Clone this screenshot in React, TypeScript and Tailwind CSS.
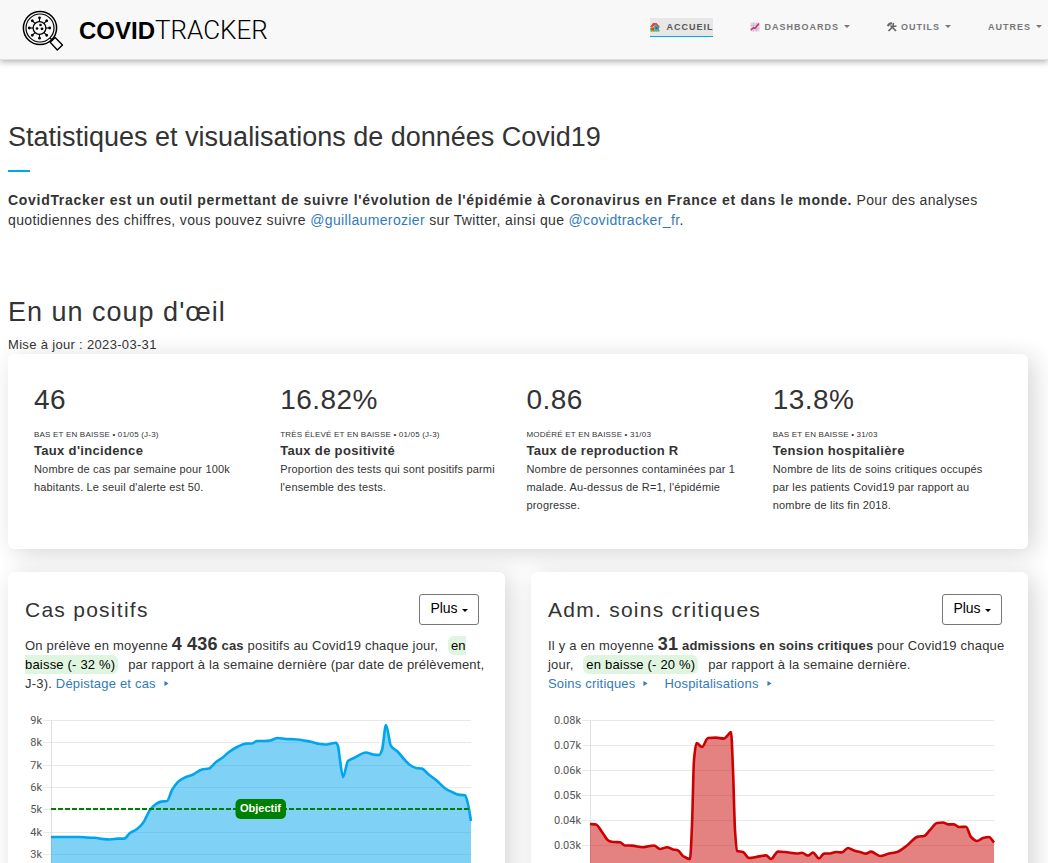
import type { ReactNode } from "react";

type Point = [number, number];

/* Monotone cubic interpolation, so the curve never overshoots its data. */
function smoothPath(points: Point[]): string {
  const n = points.length;
  const slopes: number[] = [];
  for (let i = 0; i < n - 1; i++) {
    slopes.push((points[i + 1][1] - points[i][1]) / (points[i + 1][0] - points[i][0]));
  }
  const tangents = points.map((_, i) => {
    if (i === 0) return slopes[0];
    if (i === n - 1) return slopes[n - 2];
    const a = slopes[i - 1];
    const b = slopes[i];
    return a * b <= 0 ? 0 : (2 * a * b) / (a + b);
  });
  let d = `M${points[0][0]},${points[0][1]}`;
  for (let i = 0; i < n - 1; i++) {
    const [x0, y0] = points[i];
    const [x1, y1] = points[i + 1];
    const h = (x1 - x0) / 3;
    d += `C${x0 + h},${y0 + tangents[i] * h} ${x1 - h},${y1 - tangents[i + 1] * h} ${x1},${y1}`;
  }
  return d;
}

const casPoints: Point[] = [
  [26, 127], [55, 127], [63, 127.6], [70, 127.8], [78, 129], [85, 129.5], [93, 128.6], [99, 128.6], [105, 123], [112, 119],
  [118, 113], [125, 100], [131, 94], [136, 91.6], [142, 91], [147, 80], [154, 71], [161, 67], [167, 65], [177, 59.5],
  [184, 58.5], [191, 52], [197, 48], [204, 42], [212, 37], [221, 33.6], [227, 33.5], [232, 31], [240, 31], [245, 30.5],
  [253, 28], [261, 29], [269, 29.2], [285, 31.5], [295, 34], [300, 34.5], [306, 33.6], [311, 32.8], [313, 36], [315, 50],
  [318, 67], [323, 51], [329, 48], [341, 42.5], [348, 44.5], [354, 45], [357, 40], [361, 15], [366, 36], [373, 42],
  [379, 49], [385, 55], [391, 58], [397, 58.6], [403, 64], [411, 70], [421, 79], [427, 82], [433, 84.6], [440, 85.2], [443, 94], [446, 111],
];

const admPoints: Point[] = [
  [42, 114], [48, 114.5], [54, 122], [61, 131], [66, 132], [72, 132.2], [77, 135.5], [84, 135.6], [95, 137.2], [106, 135.5],
  [112, 139], [119, 137.2], [125, 139.4], [130, 140.5], [135, 146], [142, 149], [144, 115], [146, 50], [148.5, 33], [154, 37],
  [160, 28], [168, 27.6], [176, 28.6], [180, 25], [183, 22], [185, 60], [187, 120], [189, 141], [195, 142], [201, 148],
  [210, 146.6], [218, 145.4], [223, 149], [230, 141.6], [237, 142], [249, 143.5], [254, 142.8], [260, 145.6], [265, 142.6],
  [271, 148.5], [276, 143.6], [282, 143.5], [288, 142], [294, 142.4], [300, 138], [306, 140.6], [312, 142], [318, 143.6],
  [323, 141.6], [332, 146], [341, 143.6], [349, 142], [359, 135.5], [370, 126.6], [376, 126], [382, 120], [389, 113],
  [395, 112.5], [400, 114.4], [406, 114.4], [411, 117], [418, 116.8], [423, 127], [429, 131], [435, 128], [441, 127], [446, 132.5],
];

interface ChartProps {
  title: string;
  ticks: { label: string; y: number }[];
  left: number;
  labelRight: number;
  points: Point[];
  stroke: string;
  fill: string;
  goalY?: number;
}

function AreaChart({ title, ticks, left, labelRight, points, stroke, fill, goalY }: ChartProps) {
  const line = smoothPath(points);
  const right = 446;
  const base = 212;
  return (
    <svg viewBox="0 0 463 216" role="img" aria-label={title} className="block w-full font-['Roboto',sans-serif]">
      {ticks.map((t) => (
        <g key={t.label}>
          <line x1={left - 8} x2={right} y1={t.y} y2={t.y} stroke="#e9e9e9" />
          <text x={labelRight} y={t.y + 3} textAnchor="end" fontSize="11" fill="#555">
            {t.label}
          </text>
        </g>
      ))}
      <line x1={left + 0.5} x2={left + 0.5} y1={ticks[0].y} y2={base} stroke="#e0e0e0" />
      <path d={`${line}L${points[points.length - 1][0]},${base}L${points[0][0]},${base}Z`} fill={fill} />
      <path d={line} fill="none" stroke={stroke} strokeWidth="2.6" strokeLinejoin="round" />
      {goalY !== undefined && (
        <g>
          <line x1={left} x2={right} y1={goalY} y2={goalY} stroke="green" strokeWidth="2" strokeDasharray="5 2" />
          <rect x="210.5" y={goalY - 10} width="50.5" height="20" rx="5" fill="green" />
          <text x="235.5" y={goalY + 3} textAnchor="middle" fontSize="11" fontWeight="700" fill="#fff" fontFamily="Liberation Sans, sans-serif">
            Objectif
          </text>
        </g>
      )}
    </svg>
  );
}

function Logo() {
  const spokes = [0, 45, 90, 135, 180, 225, 270, 315];
  return (
    <svg viewBox="0 0 42 42" className="size-[42px]" fill="none" stroke="#000" aria-hidden="true">
      <circle cx="18" cy="18" r="16.6" strokeWidth="1.5" />
      <circle cx="18" cy="18" r="14" strokeWidth="1.2" />
      <circle cx="17.5" cy="18" r="6.4" strokeWidth="1.3" />
      {spokes.map((a) => (
        <g key={a} transform={`rotate(${a} 17.5 18)`}>
          <path d="M17.5 11.6V8" strokeWidth="1.1" />
          <circle cx="17.5" cy="7.8" r="1.4" fill="#000" stroke="none" />
        </g>
      ))}
      <g fill="#000" stroke="none">
        <circle cx="18.5" cy="15" r="1.3" />
        <circle cx="15" cy="18.5" r="1.3" />
        <circle cx="20" cy="18.8" r="1.4" />
      </g>
      <path d="M28.2 32.2l4.900-4.600 7.400 7.400-5.200 5z" strokeWidth="1.4" strokeLinejoin="round" />
      <path d="M28 28l2.600 2.400" strokeWidth="1.4" />
    </svg>
  );
}

function HouseIcon() {
  return (
    <svg viewBox="0 0 20 20" className="size-[10px]" aria-hidden="true">
      <rect x="1" y="16" width="18" height="3" rx="1" fill="#5c9e31" />
      <path d="M3 9h14v8H3z" fill="#e8c9a0" />
      <path d="M8 8l5-4 5 5v8H9z" fill="#4f9cc0" />
      <path d="M0 10L6 2h7l7 8-2 1-6-6-9 6z" fill="#d84a2b" />
      <rect x="4" y="11" width="4" height="6" fill="#d2452d" />
      <rect x="11" y="10" width="4" height="4" fill="#2c6e91" />
      <circle cx="3" cy="14" r="2.5" fill="#4c9a2a" />
    </svg>
  );
}

function TrendIcon() {
  return (
    <svg viewBox="0 0 20 20" className="size-[10px]" aria-hidden="true">
      <rect x="1" y="1" width="18" height="18" fill="#ddd6e2" />
      <path d="M7 1v18M13 1v18M1 7h18M1 13h18" stroke="#b9aec6" strokeWidth="1" />
      <path d="M2 16l5-5 3 2 8-10" fill="none" stroke="#d81b60" strokeWidth="2.6" />
    </svg>
  );
}

function ToolsIcon() {
  return (
    <svg viewBox="0 0 20 20" className="size-[10px]" fill="none" stroke="#666" aria-hidden="true">
      <path d="M7 7l11 11" strokeWidth="3.4" />
      <path d="M1 8l4-4 5-2" strokeWidth="4.4" />
      <path d="M3 18L14 7" strokeWidth="3.4" />
      <path d="M13 2l-1 5 2 2 5-1" strokeWidth="3" />
    </svg>
  );
}

function Caret({ className = "" }: { className?: string }) {
  return (
    <svg viewBox="0 0 6 3" className={`inline-block h-[3px] w-[6px] ${className}`} aria-hidden="true">
      <path d="M0 0h6L3 3z" fill="currentColor" />
    </svg>
  );
}

function NavItem({ icon, label, active = false }: { icon?: ReactNode; label: string; active?: boolean }) {
  return (
    <a
      href="#"
      className={
        active
          ? "flex items-center gap-[6px] border-b border-[#00a8f0] bg-[#e7e7e7] text-[#555]"
          : "flex items-center gap-1 border-b border-transparent text-[#777]"
      }
    >
      {icon}
      {label}
      {!active && <Caret className="ml-[1px]" />}
    </a>
  );
}

const stats = [
  { value: "46", status: "BAS ET EN BAISSE • 01/05 (J-3)", name: "Taux d'incidence", text: "Nombre de cas par semaine pour 100k habitants. Le seuil d'alerte est 50." },
  { value: "16.82%", status: "TRÈS ÉLEVÉ ET EN BAISSE • 01/05 (J-3)", name: "Taux de positivité", text: "Proportion des tests qui sont positifs parmi l'ensemble des tests." },
  { value: "0.86", status: "MODÉRÉ ET EN BAISSE • 31/03", name: "Taux de reproduction R", text: "Nombre de personnes contaminées par 1 malade. Au-dessus de R=1, l'épidémie progresse." },
  { value: "13.8%", status: "BAS ET EN BAISSE • 31/03", name: "Tension hospitalière", text: "Nombre de lits de soins critiques occupés par les patients Covid19 par rapport au nombre de lits fin 2018." },
];

function Trend({ children }: { children: ReactNode }) {
  return <span className="mx-[6px] rounded-[6px] bg-[#dff5df] px-[3px] py-[2px] text-black">{children}</span>;
}

function MoreLink({ children }: { children: ReactNode }) {
  return (
    <a href="#" className="mr-4 text-[#337ab7]">
      {children}
      <svg viewBox="0 0 5 6" className="mb-[2px] ml-2 inline-block h-[5px] w-[5px]" aria-hidden="true">
        <path d="M0 0l5 3-5 3z" fill="currentColor" />
      </svg>
    </a>
  );
}

function DataCard({ title, summary, chart }: { title: string; summary: ReactNode; chart: ReactNode }) {
  return (
    <article className="rounded-[6px] bg-white px-[17px] pt-[22px] pb-6 shadow-[6px_4px_25px_#d6d6d6]">
      <div className="flex items-center justify-between pr-[9px]">
        <h3 className="text-[21px] leading-6 tracking-[0.06em]">{title}</h3>
        <button type="button" className="flex h-[31px] w-[60px] items-center justify-center gap-1 rounded-[3px] border border-[#777] pb-[2px] text-[14px] text-black">
          Plus <Caret className="mt-1" />
        </button>
      </div>
      <p className="mt-[10px] text-[13px] leading-[19px] tracking-[0.015em]">{summary}</p>
      <div className="mt-[17px]">{chart}</div>
    </article>
  );
}

export default function App() {
  return (
    <div className="bg-white font-['Liberation_Sans',Arial,sans-serif] text-[#333]">
      <header className="relative flex h-[60px] items-center justify-between border-b border-[#e0e0e0] bg-[#f8f8f8] pr-[6px] pl-[22px] shadow-[0_2px_6px_rgba(0,0,0,0.3)]">
        <a href="#" className="flex items-center gap-[15px] pt-[2px] text-black">
          <Logo />
          <span className="flex items-baseline pb-[2px] text-[24px] leading-none">
            <b>COVID</b>
            <span className="font-['Roboto',sans-serif] text-[26px] font-light">TRACKER</span>
          </span>
        </a>
        <nav className="flex gap-[37px] pb-[5px] text-[9px] leading-[18px] font-bold tracking-[1px]">
          <NavItem active icon={<HouseIcon />} label="ACCUEIL" />
          <NavItem icon={<TrendIcon />} label="DASHBOARDS" />
          <NavItem icon={<ToolsIcon />} label="OUTILS" />
          <NavItem label="AUTRES" />
        </nav>
      </header>

      <main className="pr-5 pb-6 pl-2">
        <section className="pt-[61px]">
          <h1 className="text-[27px] leading-8">Statistiques et visualisations de données Covid19</h1>
          <div className="mt-[17px] h-[2px] w-[22px] bg-[#00a8e8]" />
          <p className="mt-[18px] text-[14px] leading-5 tracking-wide">
            <b className="tracking-wider">
              CovidTracker est un outil permettant de suivre l'évolution de l'épidémie à Coronavirus en France et dans le monde.
            </b>{" "}
            Pour des analyses quotidiennes des chiffres, vous pouvez suivre <a href="#" className="text-[#337ab7]">@guillaumerozier</a> sur
            Twitter, ainsi que <a href="#" className="text-[#337ab7]">@covidtracker_fr</a>.
          </p>
        </section>

        <section className="pt-[66px]">
          <h2 className="text-[27px] leading-8 tracking-[1px]">En un coup d'œil</h2>
          <p className="mt-2 text-[13px] leading-[18px] tracking-wide">Mise à jour : 2023-03-31</p>
          <div className="grid grid-cols-4 rounded-[6px] bg-white pt-[30px] pr-[9px] pb-[35px] pl-[26px] shadow-[6px_4px_25px_#d6d6d6]">
            {stats.map((s) => (
              <div key={s.name} className="pr-5">
                <div className="text-[28px] leading-8 tracking-[0.015em]">{s.value}</div>
                <div className="mt-[13px] text-[8px] leading-3 tracking-wide">{s.status}</div>
                <h3 className="text-[13px] leading-[19px] font-bold tracking-wide">{s.name}</h3>
                <p className="text-[11px] leading-[18px] tracking-[0.015em]">{s.text}</p>
              </div>
            ))}
          </div>
        </section>

        <section className="mt-[23px] grid grid-cols-2 gap-[26px]">
          <DataCard
            title="Cas positifs"
            summary={
              <>
                On prélève en moyenne <b><span className="text-[18px]">4 436</span> cas</b> positifs au Covid19 chaque jour,{" "}
                <Trend>en baisse (- 32 %)</Trend> par rapport à la semaine dernière (par date de prélèvement, J-3).{" "}
                <MoreLink>Dépistage et cas</MoreLink>
              </>
            }
            chart={
              <AreaChart
                title="Cas positifs"
                ticks={["9k", "8k", "7k", "6k", "5k", "4k", "3k", "2k", "1k", "0k"].map((label, i) => ({ label, y: 10.5 + Math.round(i * 22.3) }))}
                left={26}
                labelRight={17}
                points={casPoints}
                stroke="#00a6ed"
                fill="rgba(0,166,237,0.5)"
                goalY={99}
              />
            }
          />
          <DataCard
            title="Adm. soins critiques"
            summary={
              <>
                Il y a en moyenne <b><span className="text-[18px]">31</span> admissions en soins critiques</b> pour Covid19 chaque jour,{" "}
                <Trend>en baisse (- 20 %)</Trend> par rapport à la semaine dernière.
                <br />
                <MoreLink>Soins critiques</MoreLink>
                <MoreLink>Hospitalisations</MoreLink>
              </>
            }
            chart={
              <AreaChart
                title="Admissions en soins critiques"
                ticks={["0.08k", "0.07k", "0.06k", "0.05k", "0.04k", "0.03k", "0.02k", "0.01k", "0k"].map((label, i) => ({ label, y: 10.5 + i * 25 }))}
                left={42}
                labelRight={33}
                points={admPoints}
                stroke="#cc0000"
                fill="rgba(201,4,4,0.5)"
              />
            }
          />
        </section>
      </main>
    </div>
  );
}
